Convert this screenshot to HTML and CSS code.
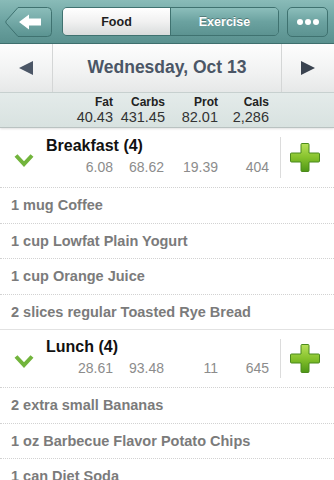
FILE: index.html
```html
<!DOCTYPE html>
<html>
<head>
<meta charset="utf-8">
<link rel="stylesheet" href="styles.css">
</head>
<body>
<div class="app">
  <div class="topbar">
    <div class="back">
      <svg width="47" height="30" viewBox="0 0 47 30">
        <defs>
          <linearGradient id="bg1" x1="0" y1="0" x2="0" y2="1">
            <stop offset="0" stop-color="#8cbebb"/>
            <stop offset="1" stop-color="#5a9391"/>
          </linearGradient>
        </defs>
        <path d="M13 0.5 H42.5 Q46.5 0.5 46.5 4.5 V25.5 Q46.5 29.5 42.5 29.5 H13 L1.2 16.2 Q0.3 15 1.2 13.8 Z" fill="url(#bg1)" stroke="#3f7270" stroke-width="1"/>
        <path d="M14 15 L24 7.5 V11.5 H36 V18.5 H24 V22.5 Z" fill="#fff"/>
      </svg>
    </div>
    <div class="seg">
      <div class="seg-item active">Food</div>
      <div class="seg-item">Exercise</div>
    </div>
    <div class="more">
      <span class="dot"></span><span class="dot"></span><span class="dot"></span>
    </div>
  </div>

  <div class="datebar">
    <div class="arrow-cell">
      <svg width="14" height="14" viewBox="0 0 14 14"><path d="M0 7 L14 0 V14 Z" fill="#4b5666"/></svg>
    </div>
    <div class="date">Wednesday, Oct 13</div>
    <div class="arrow-cell">
      <svg width="14" height="14" viewBox="0 0 14 14"><path d="M14 7 L0 0 V14 Z" fill="#3a4350"/></svg>
    </div>
  </div>

  <div class="totals">
    <div class="cols">
      <div class="lbl">Fat</div><div class="lbl">Carbs</div><div class="lbl">Prot</div><div class="lbl">Cals</div>
      <div class="val">40.43</div><div class="val">431.45</div><div class="val">82.01</div><div class="val">2,286</div>
    </div>
  </div>

  <div class="meal first">
    <div class="chev">
      <svg width="20" height="14" viewBox="0 0 20 14"><path d="M2 2.5 L10 11 L18 2.5" fill="none" stroke="#72b43c" stroke-width="4" stroke-linejoin="miter"/></svg>
    </div>
    <div class="meal-main">
      <div class="meal-title">Breakfast (4)</div>
      <div class="meal-nums"><span>6.08</span><span>68.62</span><span>19.39</span><span>404</span></div>
    </div>
    <div class="add">
      <svg width="30" height="29" viewBox="0 0 30 29">
        <defs>
          <linearGradient id="pg1" x1="0" y1="0" x2="0" y2="1">
            <stop offset="0" stop-color="#b7e05a"/>
            <stop offset="0.5" stop-color="#86c22c"/>
            <stop offset="1" stop-color="#4f9716"/>
          </linearGradient>
        </defs>
        <path d="M11 1.5 Q11 0.5 12 0.5 H18 Q19 0.5 19 1.5 V10 H28.5 Q29.5 10 29.5 11 V18 Q29.5 19 28.5 19 H19 V27.5 Q19 28.5 18 28.5 H12 Q11 28.5 11 27.5 V19 H1.5 Q0.5 19 0.5 18 V11 Q0.5 10 1.5 10 H11 Z" fill="url(#pg1)" stroke="#4b8a1c" stroke-width="1"/>
      </svg>
    </div>
  </div>
  <div class="item">1 mug Coffee</div>
  <div class="item">1 cup Lowfat Plain Yogurt</div>
  <div class="item">1 cup Orange Juice</div>
  <div class="item">2 slices regular Toasted Rye Bread</div>

  <div class="meal">
    <div class="chev">
      <svg width="20" height="14" viewBox="0 0 20 14"><path d="M2 2.5 L10 11 L18 2.5" fill="none" stroke="#72b43c" stroke-width="4" stroke-linejoin="miter"/></svg>
    </div>
    <div class="meal-main">
      <div class="meal-title">Lunch (4)</div>
      <div class="meal-nums"><span>28.61</span><span>93.48</span><span>11</span><span>645</span></div>
    </div>
    <div class="add">
      <svg width="30" height="29" viewBox="0 0 30 29">
        <defs>
          <linearGradient id="pg2" x1="0" y1="0" x2="0" y2="1">
            <stop offset="0" stop-color="#b7e05a"/>
            <stop offset="0.5" stop-color="#86c22c"/>
            <stop offset="1" stop-color="#4f9716"/>
          </linearGradient>
        </defs>
        <path d="M11 1.5 Q11 0.5 12 0.5 H18 Q19 0.5 19 1.5 V10 H28.5 Q29.5 10 29.5 11 V18 Q29.5 19 28.5 19 H19 V27.5 Q19 28.5 18 28.5 H12 Q11 28.5 11 27.5 V19 H1.5 Q0.5 19 0.5 18 V11 Q0.5 10 1.5 10 H11 Z" fill="url(#pg2)" stroke="#4b8a1c" stroke-width="1"/>
      </svg>
    </div>
  </div>
  <div class="item">2 extra small Bananas</div>
  <div class="item">1 oz Barbecue Flavor Potato Chips</div>
  <div class="item">1 can Diet Soda</div>
</div>
</body>
</html>
```

FILE: styles.css
```css
* { box-sizing: border-box; }
html, body { margin: 0; padding: 0; }
body {
  width: 334px;
  height: 480px;
  overflow: hidden;
  background: #fff;
  font-family: "Liberation Sans", Arial, sans-serif;
}
.app { width: 334px; }

.topbar {
  height: 44px;
  display: flex;
  align-items: center;
  padding: 0 6px 0 5px;
  background: linear-gradient(#89bbb8, #6ca3a1 50%, #5a918f);
  border-bottom: 1px solid #3e6f6d;
}
.back { width: 47px; height: 30px; display: flex; }
.seg {
  margin-left: 10px;
  width: 217px;
  height: 29px;
  display: flex;
  border: 1px solid #3f7270;
  border-radius: 5px;
  overflow: hidden;
}
.seg-item {
  flex: 1;
  display: flex;
  align-items: center;
  justify-content: center;
  font-weight: bold;
  font-size: 12.5px;
  color: #fff;
  text-shadow: 0 -1px 0 rgba(0,0,0,0.3);
  background: linear-gradient(#8cbebb, #6ba2a0 50%, #5c9391);
}
.seg-item.active {
  color: #1e1e1e;
  text-shadow: none;
  background: linear-gradient(#ffffff, #f1f1f1 50%, #d9dcdc);
  border-right: 1px solid #3f7270;
}
.more {
  margin-left: 8px;
  width: 41px;
  height: 30px;
  border: 1px solid #3f7270;
  border-radius: 5px;
  background: linear-gradient(#8cbebb, #6ba2a0 50%, #5c9391);
  display: flex;
  align-items: center;
  justify-content: center;
  gap: 2px;
}
.dot {
  width: 6px;
  height: 6px;
  border-radius: 50%;
  background: #fff;
}

.datebar {
  height: 49px;
  display: flex;
  background: linear-gradient(#fdfdfd, #f1f2f2 60%, #e6e8e8);
  border-bottom: 1px solid #c9d2d1;
}
.arrow-cell {
  width: 52px;
  display: flex;
  align-items: center;
  justify-content: center;
}
.date {
  flex: 1;
  border-left: 1px solid #d4d6d6;
  border-right: 1px solid #d4d6d6;
  display: flex;
  align-items: center;
  justify-content: center;
  font-weight: bold;
  font-size: 17.5px;
  color: #4b5666;
  padding-bottom: 1px;
}

.totals {
  height: 35px;
  background: linear-gradient(#e4ebea, #d8e2e0);
  border-bottom: 1px solid #b9c2c1;
  box-shadow: 0 1px 2px rgba(0,0,0,0.12);
  padding: 2px 0 0 61px;
}
.cols {
  display: grid;
  grid-template-columns: 52px 52px 53px 51px;
  line-height: 14px;
}
.lbl {
  text-align: right;
  font-weight: bold;
  font-size: 12px;
  color: #222;
}
.val {
  text-align: right;
  font-size: 14.5px;
  color: #333;
  line-height: 17px;
}

.meal {
  height: 58px;
  display: flex;
  align-items: stretch;
  border-bottom: 1px dotted #d2d2d2;
}
.meal.first { height: 60px; }
.chev {
  width: 46px;
  display: flex;
  align-items: center;
  padding-left: 14px;
  padding-top: 4px;
}
.meal-main {
  width: 234px;
  padding-top: 8px;
}
.meal.first .meal-main { padding-top: 9px; }
.meal-title {
  font-weight: bold;
  font-size: 16px;
  color: #111;
  line-height: 18px;
}
.meal-nums {
  display: grid;
  grid-template-columns: 15px 52px 51px 54px 51px;
  font-size: 14px;
  color: #8c8c8c;
  line-height: 16px;
  margin-top: 4px;
}
.meal-nums span { text-align: right; }
.meal-nums span:first-child { grid-column: 2; }
.add {
  flex: 1;
  display: flex;
  align-items: center;
  justify-content: center;
  padding-right: 4px;
  position: relative;
}
.add::before {
  content: "";
  position: absolute;
  left: 0;
  top: 9px;
  bottom: 9px;
  width: 1px;
  background: #dcdcdc;
}

.item {
  height: 35.5px;
  display: flex;
  align-items: center;
  padding-left: 11px;
  font-weight: bold;
  font-size: 14.5px;
  color: #7b7b7b;
  border-bottom: 1px dotted #d2d2d2;
}
.item:has(+ .meal) { border-bottom: 1px solid #e2e2e2; }
```
